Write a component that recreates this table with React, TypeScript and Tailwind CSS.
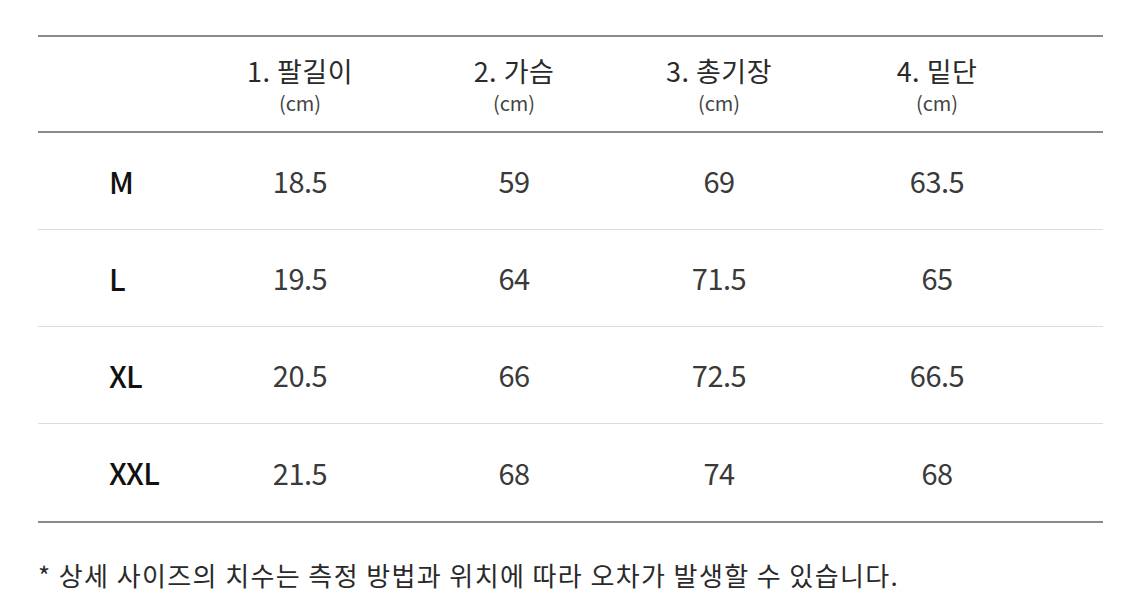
import React from "react"

const headers = ["1. 팔길이", "2. 가슴", "3. 총기장", "4. 밑단"]

const rows = [
  { size: "M", values: ["18.5", "59", "69", "63.5"] },
  { size: "L", values: ["19.5", "64", "71.5", "65"] },
  { size: "XL", values: ["20.5", "66", "72.5", "66.5"] },
  { size: "XXL", values: ["21.5", "68", "74", "68"] },
]

const grid = "grid grid-cols-[157px_210px_218px_192px_244px_1fr] items-center"

const App: React.FC = () => {
  return (
    <div
      className="w-[1125px] h-[612px] bg-white pt-[35px] px-[38px] text-[#333]"
      style={{ fontFamily: '"Noto Sans CJK KR", "Noto Sans", sans-serif' }}
    >
      <div className="w-[1065px] border-t-2 border-b-2 border-[#8a8a8a]">
        {/* header */}
        <div className={`${grid} h-[96px] border-b-2 border-[#8a8a8a]`}>
          <div />
          {headers.map((h) => (
            <div key={h} className="flex flex-col items-center pt-[2px]">
              <span className="text-[27px] leading-[32px] tracking-[0.5px] text-[#2a2a2a]">{h}</span>
              <span className="mt-[3px] text-[20px] leading-[25px] text-[#444]">(cm)</span>
            </div>
          ))}
          <div />
        </div>
        {rows.map((r, i) => (
          <div
            key={r.size}
            className={`${grid} h-[97px] ${i < rows.length - 1 ? "border-b border-[#dcdcdc]" : ""}`}
          >
            <div className="pl-[71px] text-[30px] font-medium text-[#111] tracking-[-0.8px]">{r.size}</div>
            {r.values.map((v, j) => (
              <div key={j} className="text-center text-[29px] tracking-[-0.5px] text-[#3a3a3a]">
                {v}
              </div>
            ))}
            <div />
          </div>
        ))}
      </div>
      <p className="mt-[36px] text-[26px] leading-[32px] tracking-[1.4px] text-[#2a2a2a]">
        * 상세 사이즈의 치수는 측정 방법과 위치에 따라 오차가 발생할 수 있습니다.
      </p>
    </div>
  )
}

export default App
